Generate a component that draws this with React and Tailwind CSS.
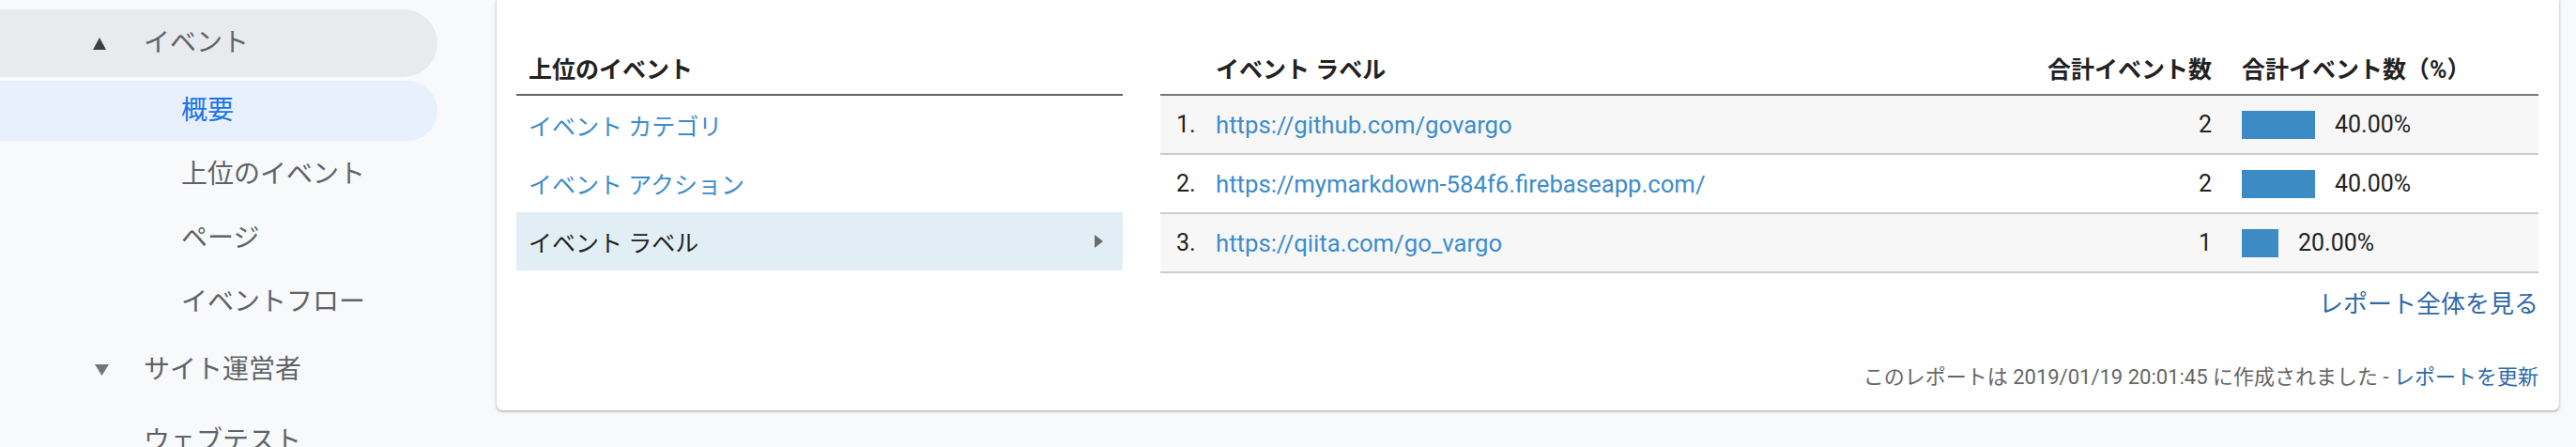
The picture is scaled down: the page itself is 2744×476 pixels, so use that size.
import React from "react";

const navSub = ["上位のイベント", "ページ", "イベントフロー"];

const leftRows = [
  { label: "イベント カテゴリ", active: false },
  { label: "イベント アクション", active: false },
  { label: "イベント ラベル", active: true },
];

const rows = [
  { n: "1.", url: "https://github.com/govargo", count: "2", pct: 40, pctText: "40.00%" },
  { n: "2.", url: "https://mymarkdown-584f6.firebaseapp.com/", count: "2", pct: 40, pctText: "40.00%" },
  { n: "3.", url: "https://qiita.com/go_vargo", count: "1", pct: 20, pctText: "20.00%" },
];

function Sidebar() {
  return (
    <nav className="w-[529px] shrink-0 pt-[10px] flex flex-col gap-[4px] text-[28px] leading-[40px] text-[#5f6368]">
      <div className="h-[72px] shrink-0 w-[466px] rounded-r-full bg-[#e8eaed] flex items-center pl-[99px]">
        <svg width="14" height="13" viewBox="0 0 14 13" className="shrink-0">
          <path d="M7 0L14 13H0Z" fill="#3c4043" />
        </svg>
        <span className="ml-[40px]">イベント</span>
      </div>
      <div className="h-[64px] shrink-0 w-[466px] rounded-r-full bg-[#e8f0fe] flex items-center pl-[193px] text-[#1a73e8]">
        概要
      </div>
      {navSub.map((t) => (
        <div key={t} className="h-[64px] shrink-0 w-[466px] flex items-center pl-[193px]">
          {t}
        </div>
      ))}
      <div className="h-[72px] shrink-0 w-[466px] flex items-center pl-[101px]">
        <svg width="15" height="12" viewBox="0 0 15 12" className="shrink-0">
          <path d="M0 0H15L7.5 12Z" fill="#757575" />
        </svg>
        <span className="ml-[37px]">サイト運営者</span>
      </div>
      <div className="h-[72px] shrink-0 w-[466px] flex items-center pl-[153px]">ウェブテスト</div>
    </nav>
  );
}

function LeftTable() {
  return (
    <div className="w-[646px] shrink-0 text-[25px] leading-[36px]">
      <div className="h-[102px] flex items-end pb-[7px] pl-[13px] font-bold text-[#222] border-b-2 border-[#666]">
        上位のイベント
      </div>
      {leftRows.map((r) =>
        r.active ? (
          <div
            key={r.label}
            className="h-[62px] flex items-center justify-between pt-[5px] pl-[13px] pr-[21px] bg-[#e1eef5] text-[#222]"
          >
            <span>{r.label}</span>
            <svg width="9" height="14" viewBox="0 0 9 14" className="-mt-[5px]">
              <path d="M0 0L9 7L0 14Z" fill="#6b6b6b" />
            </svg>
          </div>
        ) : (
          <div key={r.label} className="h-[62px] flex items-center pt-[5px] pl-[13px] text-[#3d8ccb]">
            {r.label}
          </div>
        )
      )}
    </div>
  );
}

function RightTable() {
  return (
    <div className="text-[25px] leading-[36px]">
      <div className="h-[102px] flex items-end pb-[7px] font-bold text-[#222] border-b-2 border-[#777]">
        <div className="w-[59px] shrink-0" />
        <div className="flex-1">イベント ラベル</div>
        <div className="w-[200px] text-right">合計イベント数</div>
        <div className="w-[348px] pl-[32px]">合計イベント数（%）</div>
      </div>
      {rows.map((r, i) => (
        <div
          key={r.n}
          className={`h-[63px] flex items-center border-b-2 border-[#cccccc] text-[#222] ${
            i % 2 === 0 ? "bg-[#f7f7f7]" : "bg-white"
          }`}
        >
          <div className="w-[59px] shrink-0 pl-[17px]">{r.n}</div>
          <div className="flex-1 text-[25.7px] text-[#3d8ccb]">{r.url}</div>
          <div className="w-[200px] text-right">{r.count}</div>
          <div className="w-[348px] pl-[32px] flex items-center">
            <div className="h-[30px] bg-[#3c8bc4]" style={{ width: `${Math.round(r.pct * 1.96)}px` }} />
            <span className="ml-[21px]">{r.pctText}</span>
          </div>
        </div>
      ))}
    </div>
  );
}

function Card() {
  return (
    <div className="h-[437px] bg-white rounded-b-[6px] shadow-[0_1px_2px_rgba(60,64,67,0.3),0_1px_3px_1px_rgba(60,64,67,0.15)] pl-[21px] pr-[22px] flex flex-col">
      <div className="flex gap-[40px]">
        <LeftTable />
        <div className="flex-1 flex flex-col">
          <RightTable />
          <a className="self-end mt-[15px] text-[26px] leading-[36px] text-[#2f6aa8]">レポート全体を見る</a>
        </div>
      </div>
      <p className="mt-auto pb-[20px] text-right text-[22px] leading-[30px] text-[#666]">
        このレポートは 2019/01/19 20:01:45 に作成されました - <a className="text-[#2f6aa8]">レポートを更新</a>
      </p>
    </div>
  );
}

export default function App() {
  return (
    <div className="flex h-[476px] w-[2744px] overflow-hidden bg-[#f8f9fa] font-['Roboto','Noto_Sans_CJK_JP',sans-serif]">
      <Sidebar />
      <main className="flex-1 pr-[18px]">
        <Card />
      </main>
    </div>
  );
}
